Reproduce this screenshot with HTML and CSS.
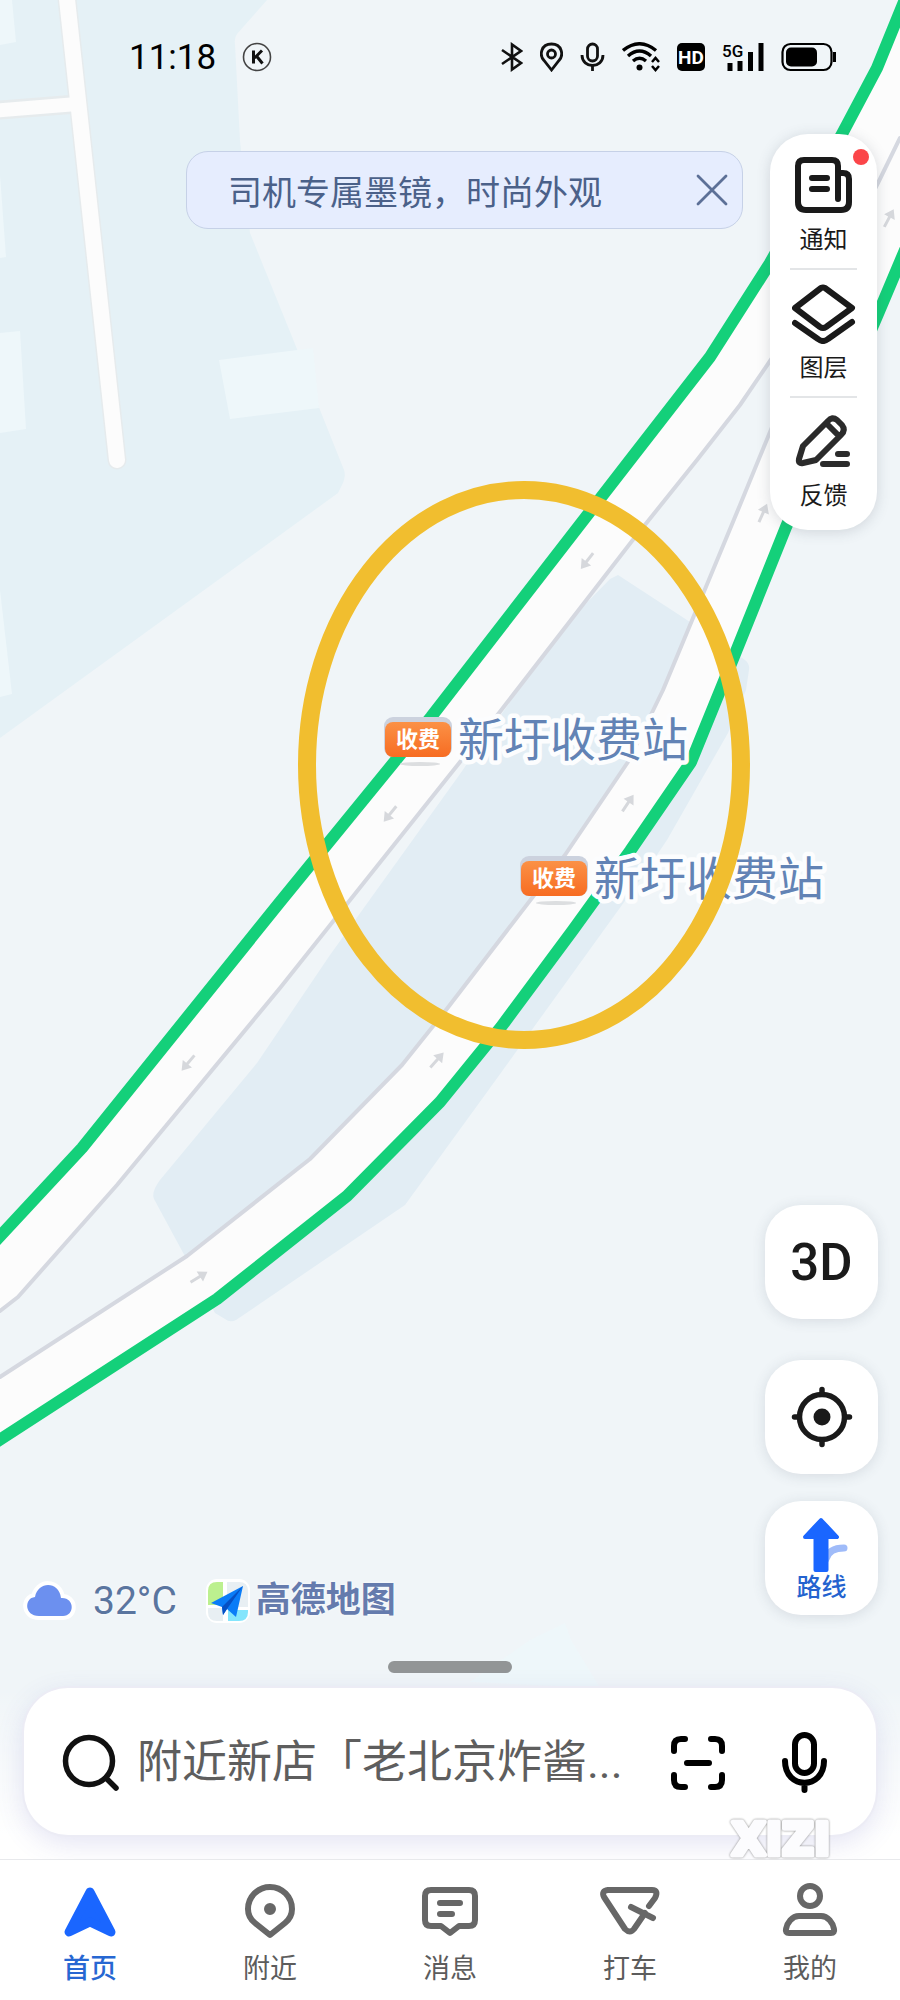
FILE: index.html
```html
<!DOCTYPE html>
<html lang="zh-CN">
<head>
    <meta charset="UTF-8">
    <meta name="viewport" content="width=device-width, initial-scale=1.0">
    <title>高德地图</title>
    <link rel="stylesheet" href="styles.css">
</head>
<body>
<div class="app">
    <!-- Map canvas -->
    <svg class="map" viewBox="0 0 900 2000" preserveAspectRatio="xMidYMid slice" role="img" aria-label="地图">
        <defs>
            <linearGradient id="toll" x1="0" y1="0" x2="0" y2="1">
                <stop offset="0" stop-color="#fb9146"/>
                <stop offset="1" stop-color="#f76c22"/>
            </linearGradient>
            <path id="arrow" d="M-10 -1.5H1V-6L10 0L1 6V1.5H-10Z"/>
        </defs>
        <path class="park" d="M0 0H267L237 34Q234 38 235 44L240 141L250 233L297 349L320 410L344 470Q346 476 343 483L338 493L0 738Z"/>
        <path class="house" d="M0 0H12L16 42L0 45ZM0 175L6 257L0 258ZM0 333L20 331L26 429L0 433ZM0 590L12 694L0 697ZM219 360L313 348L319 408L230 419ZM470 1682L530 1640L565 1623L571 1640L600 1688Z"/>
        <path class="lane-edge" d="M66 -10L117 460M0 110L77 104"/>
        <path class="lane" d="M66 -10L117 460"/>
        <path class="lane side" d="M-10 111L77 104"/>
        <path class="plaza" d="M618 575L687 620L745 660Q750 664 749 670L746 690L728 733L667 840L640 880L482 1099L405 1205L236 1320Q230 1323 225 1319L215 1313L187 1260L154 1199Q151 1192 160 1180L257 1063L330 955L460 774L560 630L610 579Z"/>
        <!-- roads -->
        <path class="road" d="M905 0L877 68L842 134L770 263L710 357L630 460L431 717L280 902L82 1148L0 1237V1311L18 1297L117 1185L280 988L499 713L632 541L697 460L740 405L770 362L830 270V290L770 432L740 505L703 594L663 690L628 762L565 855L446 1010L402 1065L310 1159L187 1256L0 1377V1440L217 1299L347 1196L440 1102L501 1027L573 930L630 851L691 762L715 697L735 654L786 527L878 314L900 262V0Z"/>
        <path class="road-line" d="M900 138L878 183L830 275L770 361L740 405L697 460L632 541L499 713L280 988L117 1185L18 1297L0 1311M830 285L770 432L740 505L703 594L663 690L628 762L565 855L446 1010L402 1065L310 1159L187 1256L0 1377"/>
        <path class="traffic" d="M908 -8L877 68L842 134L770 263L710 357L630 460L431 717L280 902L82 1148L-10 1247M905 250L878 314L786 527L735 654L691 762L630 851L573 930L501 1027L440 1102L347 1196L217 1299L-10 1446"/>
        <g class="arrows">
            <use href="#arrow" transform="translate(587 561) rotate(128)"/>
            <use href="#arrow" transform="translate(390 814) rotate(129)"/>
            <use href="#arrow" transform="translate(188 1063) rotate(130)"/>
            <use href="#arrow" transform="translate(199 1277) rotate(-32)"/>
            <use href="#arrow" transform="translate(437 1060) rotate(-48)"/>
            <use href="#arrow" transform="translate(628 803) rotate(-56)"/>
            <use href="#arrow" transform="translate(763 513) rotate(-66)"/>
            <use href="#arrow" transform="translate(889 218) rotate(-62)"/>
        </g>
        <!-- toll stations -->
        <g>
            <ellipse class="pin-shadow" cx="420" cy="764" rx="20" ry="2"/>
            <rect class="pin-back" x="384" y="717" width="68" height="40" rx="9"/>
            <rect x="385" y="722" width="66" height="35" rx="8" fill="url(#toll)"/>
            <text class="pin-text" x="418" y="747">收费</text>
            <text class="station" x="458" y="756">新圩收费站</text>
        </g>
        <g transform="translate(136 139)">
            <ellipse class="pin-shadow" cx="420" cy="764" rx="20" ry="2"/>
            <rect class="pin-back" x="384" y="717" width="68" height="40" rx="9"/>
            <rect x="385" y="722" width="66" height="35" rx="8" fill="url(#toll)"/>
            <text class="pin-text" x="418" y="747">收费</text>
            <text class="station" x="458" y="756">新圩收费站</text>
        </g>
        <ellipse class="mark" cx="524" cy="765" rx="217" ry="275"/>
    </svg>

    <header class="status">
        <span class="time">11:18</span>
        <svg width="30" height="30" viewBox="0 0 30 30"><circle cx="15" cy="15" r="13.5" fill="none" stroke="#444" stroke-width="1.6"/><path d="M11.5 8.5V21.5M20 8.5L12.5 16M14.5 14L20.5 21.5" fill="none" stroke="#111" stroke-width="3"/></svg>
        <div class="status-icons">
            <svg width="22" height="30" viewBox="0 0 22 30" fill="none" stroke="#111" stroke-width="2.6"><path d="M1 8L20 21L11 27.500V2.500L20 9L1 22"/></svg>
            <svg width="23" height="30" viewBox="0 0 23 30" fill="none" stroke="#111" stroke-width="2.8"><path d="M11.500 28L4 18.500C-1 13 1 2 11.500 2S24 13 19 18.500Z"/><circle cx="11.500" cy="12" r="4"/></svg>
            <svg width="25" height="30" viewBox="0 0 25 30" fill="none" stroke="#111" stroke-width="2.800"><rect x="7.500" y="2" width="10" height="17" rx="5"/><path d="M2 13C2 27 23 27 23 13M12.500 24V29"/></svg>
            <svg width="38" height="30" viewBox="0 0 38 30" fill="none" stroke="#000" stroke-width="3.400"><path d="M1 8.500Q17.500 -5 34 8.500M6 14Q17.500 4 29 14M11 19Q17.500 13.500 24 19"/><circle cx="17.500" cy="25.500" r="3" fill="#000" stroke="none"/><path d="M30 20L33.500 16L37 20M30 24L33.500 28L37 24" stroke-width="2.500"/></svg>
            <svg width="28" height="30" viewBox="0 0 28 30"><rect y="1" width="28" height="28" rx="5"/><text class="hd" x="14" y="22">HD</text></svg>
            <svg class="signal" width="42" height="30" viewBox="0 0 42 30"><text class="fiveg" x="0" y="15">5G</text><path d="M8 21V29M18 19V29M28.500 10V29M39 1V29" stroke="#000" stroke-width="5"/></svg>
            <svg width="55" height="30" viewBox="0 0 55 30"><rect x="1.500" y="2" width="49" height="26" rx="8" fill="none" stroke="#000" stroke-width="2.200"/><rect x="5" y="5.500" width="31" height="19" rx="5"/><path d="M53.500 10V20" stroke="#000" stroke-width="3"/></svg>
        </div>
    </header>

    <div class="top-row">
        <div class="banner">
            <a class="banner-text" href="#">司机专属墨镜，时尚外观</a>
            <button class="plain" type="button" aria-label="关闭">
                <svg width="32" height="32" viewBox="0 0 32 32" fill="none" stroke="#5c7097" stroke-width="2.800" stroke-linecap="round"><path d="M2 2L30 30M30 2L2 30"/></svg>
            </button>
        </div>
        <div class="tools">
            <button class="tool" type="button">
                <svg width="64" height="60" viewBox="0 0 64 60" fill="none" stroke="#1a1a1a" stroke-width="6" stroke-linecap="round" stroke-linejoin="round"><path d="M46 45V12Q46 6 40 6H12Q6 6 6 12V48Q6 56 14 56H49Q57 56 57 48V25Q57 19 51 19H47M20 24H35M20 35H35"/></svg>
                <span>通知</span>
                <i class="dot"></i>
            </button>
            <button class="tool" type="button">
                <svg width="64" height="60" viewBox="0 0 64 60" fill="none" stroke="#1a1a1a" stroke-width="6" stroke-linecap="round" stroke-linejoin="round"><path d="M29 4Q31 3 33 4L60 24L34 43Q31 45 28 43L3 24ZM3 39L26 55Q31 59 36 55L60 38"/></svg>
                <span>图层</span>
            </button>
            <button class="tool" type="button">
                <svg width="64" height="60" viewBox="0 0 64 60" fill="none" stroke="#2b2b2b" stroke-width="6" stroke-linecap="round" stroke-linejoin="round"><path d="M36 9Q40 4 45 8L50 13Q54 18 49 23L24 48L11 51Q6 52 7 47L11 34ZM35 12L46 23"/><path d="M46 42H55M31 52H55"/></svg>
                <span>反馈</span>
            </button>
        </div>
    </div>

    <div class="bottom-row">
        <div class="weather">
            <svg class="cloud" width="50" height="40" viewBox="0 0 50 40"><path d="M14 35C-1 35 -1 17 10 16C13 0 34 0 36 17C50 16 50 35 38 35Z" fill="#6c90ef" stroke="#fff" stroke-width="8" paint-order="stroke"/></svg>
            <span class="temp">32°C</span>
        </div>
        <div class="brand">
            <svg width="44" height="44" viewBox="0 0 44 44">
                <rect width="44" height="44" rx="11" fill="#fff"/>
                <path d="M11 3H17V26H2V12Q2 3 11 3Z" fill="#bcf08f"/>
                <path d="M21 3H33Q42 3 42 12V28H21ZM2 29H17V42H11Q2 42 2 33Z" fill="#e8eff3"/>
                <path d="M22 31H42V33Q42 42 33 42H22Z" fill="#84e5fc"/>
                <path d="M37 7L5 24L16 28L17 36L21 30L30 38Z" fill="#0a7cf7"/>
                <path d="M37 7L16 28L17 36L21 30Z" fill="#0650c4"/>
            </svg>
            <span>高德地图</span>
        </div>
        <div class="fabs">
            <button class="fab fab-3d" type="button">3D</button>
            <button class="fab" type="button" aria-label="定位">
                <svg width="62" height="62" viewBox="0 0 62 62" fill="none" stroke="#1a1a1a" stroke-width="5.500" stroke-linecap="round"><circle cx="31" cy="31" r="22.500"/><path d="M31 3.500V8M31 54V58.500M3.500 31H8M54 31H58.500"/><circle cx="31" cy="31" r="8.500" fill="#1a1a1a" stroke="none"/></svg>
            </button>
            <button class="fab fab-route" type="button">
                <svg width="60" height="56" viewBox="0 0 60 56"><path d="M34 42Q37 31 52 31" fill="none" stroke="#9fbbf9" stroke-width="7" stroke-linecap="round"/><path d="M29 3L45 20H34.500V53H23.500V20H13Z" fill="#1a66ff" stroke="#1a66ff" stroke-width="4" stroke-linejoin="round"/></svg>
                <span>路线</span>
            </button>
        </div>
    </div>

    <section class="sheet">
        <div class="handle"></div>
        <form class="search">
            <label for="q" aria-label="搜索">
                <svg width="58" height="58" viewBox="0 0 58 58" fill="none" stroke="#111" stroke-width="5.500" stroke-linecap="round"><circle cx="27" cy="28" r="23.500"/><path d="M44 45L54 55"/></svg>
            </label>
            <input id="q" type="text" placeholder="附近新店「老北京炸酱...">
            <button class="plain" type="button" aria-label="扫一扫">
                <svg width="54" height="62" viewBox="0 0 54 62" fill="none" stroke="#000" stroke-width="6" stroke-linecap="round"><path d="M3 20V15Q3 8 10 8H14M40 8H44Q51 8 51 15V20M51 44V49Q51 56 44 56H40M14 56H10Q3 56 3 49V44M16 32H38"/></svg>
            </button>
            <button class="plain mic" type="button" aria-label="语音">
                <svg width="46" height="62" viewBox="0 0 46 62" fill="none" stroke="#000" stroke-width="6" stroke-linecap="round"><rect x="14" y="4" width="19" height="38" rx="9.500"/><path d="M4 30C4 59 43 59 43 30M23.500 53V59"/></svg>
            </button>
        </form>
        <svg class="watermark" width="116" height="60" viewBox="0 0 116 60"><text x="58" y="43">XIZI</text></svg>
    </section>

    <nav class="tabs">
        <a class="tab active" href="#">
            <svg width="56" height="56" viewBox="0 0 56 56"><path d="M28 8L7 48L28 38L49 48Z" fill="#1a66ff" stroke="#1a66ff" stroke-width="9" stroke-linejoin="round"/></svg>
            <span>首页</span>
        </a>
        <a class="tab" href="#">
            <svg width="56" height="56" viewBox="0 0 56 56"><path d="M28 51L13 39C8 35 6 30 6 25A22 22 0 0 1 50 25C50 30 48 35 43 39Z"/><circle cx="28" cy="25" r="3"/></svg>
            <span>附近</span>
        </a>
        <a class="tab" href="#">
            <svg width="56" height="56" viewBox="0 0 56 56"><path d="M9 6H47Q53 6 53 12V36Q53 42 47 42H37L28 49L19 42H9Q3 42 3 36V12Q3 6 9 6ZM18 19H38M18 30H30"/></svg>
            <span>消息</span>
        </a>
        <a class="tab" href="#">
            <svg width="56" height="56" viewBox="0 0 56 56"><path d="M47 22L53 14Q57 6 50 6H6Q-1 7 2 13L23 45Q28 50 32 45L43 29M29 23L51 34"/></svg>
            <span>打车</span>
        </a>
        <a class="tab" href="#">
            <svg width="56" height="56" viewBox="0 0 56 56"><circle cx="28" cy="12" r="10"/><path d="M17 32H39C46 32 51 39 52 45Q53 49 49 49H7Q3 49 4 45C5 39 10 32 17 32Z"/></svg>
            <span>我的</span>
        </a>
    </nav>
</div>
</body>
</html>
```

FILE: styles.css
```css
* {
    box-sizing: border-box;
}
body {
    margin: 0;
    font-family: Roboto, "Noto Sans CJK SC", sans-serif;
    background-color: #f0f5f8;
    color: #1a1a1a;
}
a {
    color: inherit;
    text-decoration: none;
}
button {
    font-family: inherit;
    color: inherit;
    border: none;
    padding: 0;
    cursor: pointer;
}
svg {
    display: block;
    flex: none;
}
.plain {
    background: none;
}
.app {
    position: relative;
    min-height: 100vh;
    display: flex;
    flex-direction: column;
    overflow: hidden;
}

/* map */
.map {
    position: absolute;
    inset: 0;
    width: 100%;
    height: 100%;
}
.app > *:not(.map) {
    position: relative;
}
.park {
    fill: #e5f1f6;
}
.house {
    fill: #eef7fa;
}
.plaza {
    fill: #e2edf4;
}
.lane-edge, .lane, .road-line, .traffic, .mark {
    fill: none;
    stroke-linecap: round;
    stroke-linejoin: round;
}
.lane-edge {
    stroke: #e6ebed;
    stroke-width: 19;
}
.lane {
    stroke: #fcfcfc;
    stroke-width: 16;
}
.side {
    stroke-width: 14;
}
.road {
    fill: #fcfcfc;
}
.road-line {
    stroke: #d5d8e0;
    stroke-width: 4;
}
.traffic {
    stroke: #14d07a;
    stroke-width: 12;
}
.arrows {
    fill: #d6d8dc;
}
.pin-shadow {
    fill: #dcdee0;
}
.pin-back {
    fill: #ccd2de;
}
.pin-text {
    font-size: 22px;
    font-weight: 700;
    fill: #fff;
    text-anchor: middle;
}
.station {
    font-size: 46px;
    fill: #6283b5;
    stroke: #fcfdfe;
    stroke-width: 9;
    stroke-linejoin: round;
    paint-order: stroke;
}
.mark {
    stroke: #f1be2f;
    stroke-width: 18;
}

/* status bar */
.status {
    display: flex;
    align-items: center;
    height: 114px;
    padding: 0 64px 0 129px;
    gap: 26px;
}
.time {
    font-size: 35px;
    color: #000;
}
.status-icons {
    display: flex;
    margin-left: auto;
    gap: 17px;
}
.hd {
    font-size: 19px;
    font-weight: 700;
    fill: #fff;
    text-anchor: middle;
}
.signal {
    overflow: visible;
}
.fiveg {
    font-size: 17px;
    font-weight: 500;
}

/* banner and tool card */
.top-row {
    display: flex;
    align-items: flex-start;
    gap: 27px;
    padding: 20px 23px 0 186px;
}
.banner {
    flex: 1;
    display: flex;
    align-items: center;
    justify-content: space-between;
    height: 78px;
    margin-top: 17px;
    padding: 0 14px 0 41px;
    background-color: #e6edfe;
    border: 1px solid #c6d1e7;
    border-radius: 22px;
}
.banner-text {
    font-size: 34px;
    color: #4b6189;
    white-space: nowrap;
}
.tools {
    width: 107px;
    padding: 0 20px;
    background-color: #fff;
    border-radius: 38px;
    box-shadow: 0 2px 14px rgba(60, 70, 90, 0.18);
}
.tool {
    position: relative;
    display: flex;
    flex-direction: column;
    align-items: center;
    width: 100%;
    padding: 20px 0 12px;
    font-size: 24px;
    line-height: 32px;
    background: none;
}
.tool + .tool {
    padding-top: 14px;
    border-top: 2px solid #e3e5e7;
}
.tool span {
    margin-top: 10px;
    white-space: nowrap;
}
.tool + .tool span {
    margin-top: 8px;
}
.tool:last-child {
    padding-bottom: 18px;
}
.dot {
    position: absolute;
    top: 15px;
    right: -12px;
    width: 16px;
    height: 16px;
    border-radius: 50%;
    background-color: #fb4549;
}

/* weather, brand, round buttons */
.bottom-row {
    display: flex;
    align-items: flex-end;
    margin-top: auto;
    padding: 0 22px 0 25px;
}
.weather, .brand {
    display: flex;
    align-items: center;
    height: 44px;
    margin-bottom: -8px;
    text-shadow: 0 0 3px #fff;
}
.weather {
    gap: 18px;
}
.cloud {
    overflow: visible;
}
.temp {
    font-size: 39px;
    color: #5a759f;
}
.brand {
    gap: 6px;
    margin-left: 29px;
    font-size: 35px;
    line-height: 40px;
    font-weight: 700;
    color: #657bad;
}
.fabs {
    display: flex;
    flex-direction: column;
    gap: 27px;
    margin-left: auto;
}
.fab {
    display: flex;
    flex-direction: column;
    align-items: center;
    justify-content: center;
    width: 113px;
    height: 114px;
    background-color: #fff;
    border-radius: 36px;
    box-shadow: 0 2px 14px rgba(60, 70, 90, 0.14);
}
.fab-3d {
    margin-bottom: 14px;
    font-size: 51px;
    font-weight: 500;
}
.fab-route {
    padding-top: 4px;
    font-size: 25px;
    font-weight: 500;
    line-height: 30px;
    color: #2463cf;
}

/* search sheet */
.sheet {
    padding: 46px 24px 24px;
    background: linear-gradient(rgba(255, 255, 255, 0) 30%, #fff 90%);
}
.handle {
    width: 124px;
    height: 12px;
    margin: 0 auto 15px;
    border-radius: 6px;
    background-color: #929596;
}
.search {
    display: flex;
    align-items: center;
    height: 147px;
    padding: 0 49px 0 38px;
    background-color: #fff;
    border-radius: 44px;
    box-shadow: 0 0 0 2px #ececf5, 0 8px 28px rgba(80, 80, 180, 0.16);
}
.search input {
    flex: 1;
    min-width: 0;
    margin-left: 17px;
    padding: 2px 0 0;
    border: none;
    outline: none;
    background: none;
    font-family: Roboto, "Noto Sans CJK SC", sans-serif;
    font-size: 45px;
}
.search input::placeholder {
    color: #5e5e5e;
    opacity: 1;
}
.mic {
    margin-left: 56px;
}
.watermark {
    position: absolute;
    right: 61px;
    bottom: -13px;
    z-index: 1;
    overflow: visible;
    filter: drop-shadow(0 0 1px #888);
}
.watermark text {
    font-family: "DejaVu Sans", sans-serif;
    font-size: 44px;
    font-weight: 700;
    fill: #fcfcfe;
    stroke: #fcfcfe;
    stroke-width: 5;
    stroke-linejoin: round;
    text-anchor: middle;
}

/* tab bar */
.tabs {
    display: grid;
    grid-template-columns: repeat(5, 1fr);
    border-top: 1px solid #e8e9ec;
    background-color: #fff;
}
.tab {
    display: flex;
    flex-direction: column;
    align-items: center;
    gap: 13px;
    padding: 24px 0 15px;
    font-size: 27px;
    line-height: 32px;
    color: #5c5c5c;
}
.tab svg {
    overflow: visible;
    fill: none;
    stroke: #676767;
    stroke-width: 6;
    stroke-linecap: round;
    stroke-linejoin: round;
}
.active {
    color: #2767d2;
    font-weight: 500;
}
```
